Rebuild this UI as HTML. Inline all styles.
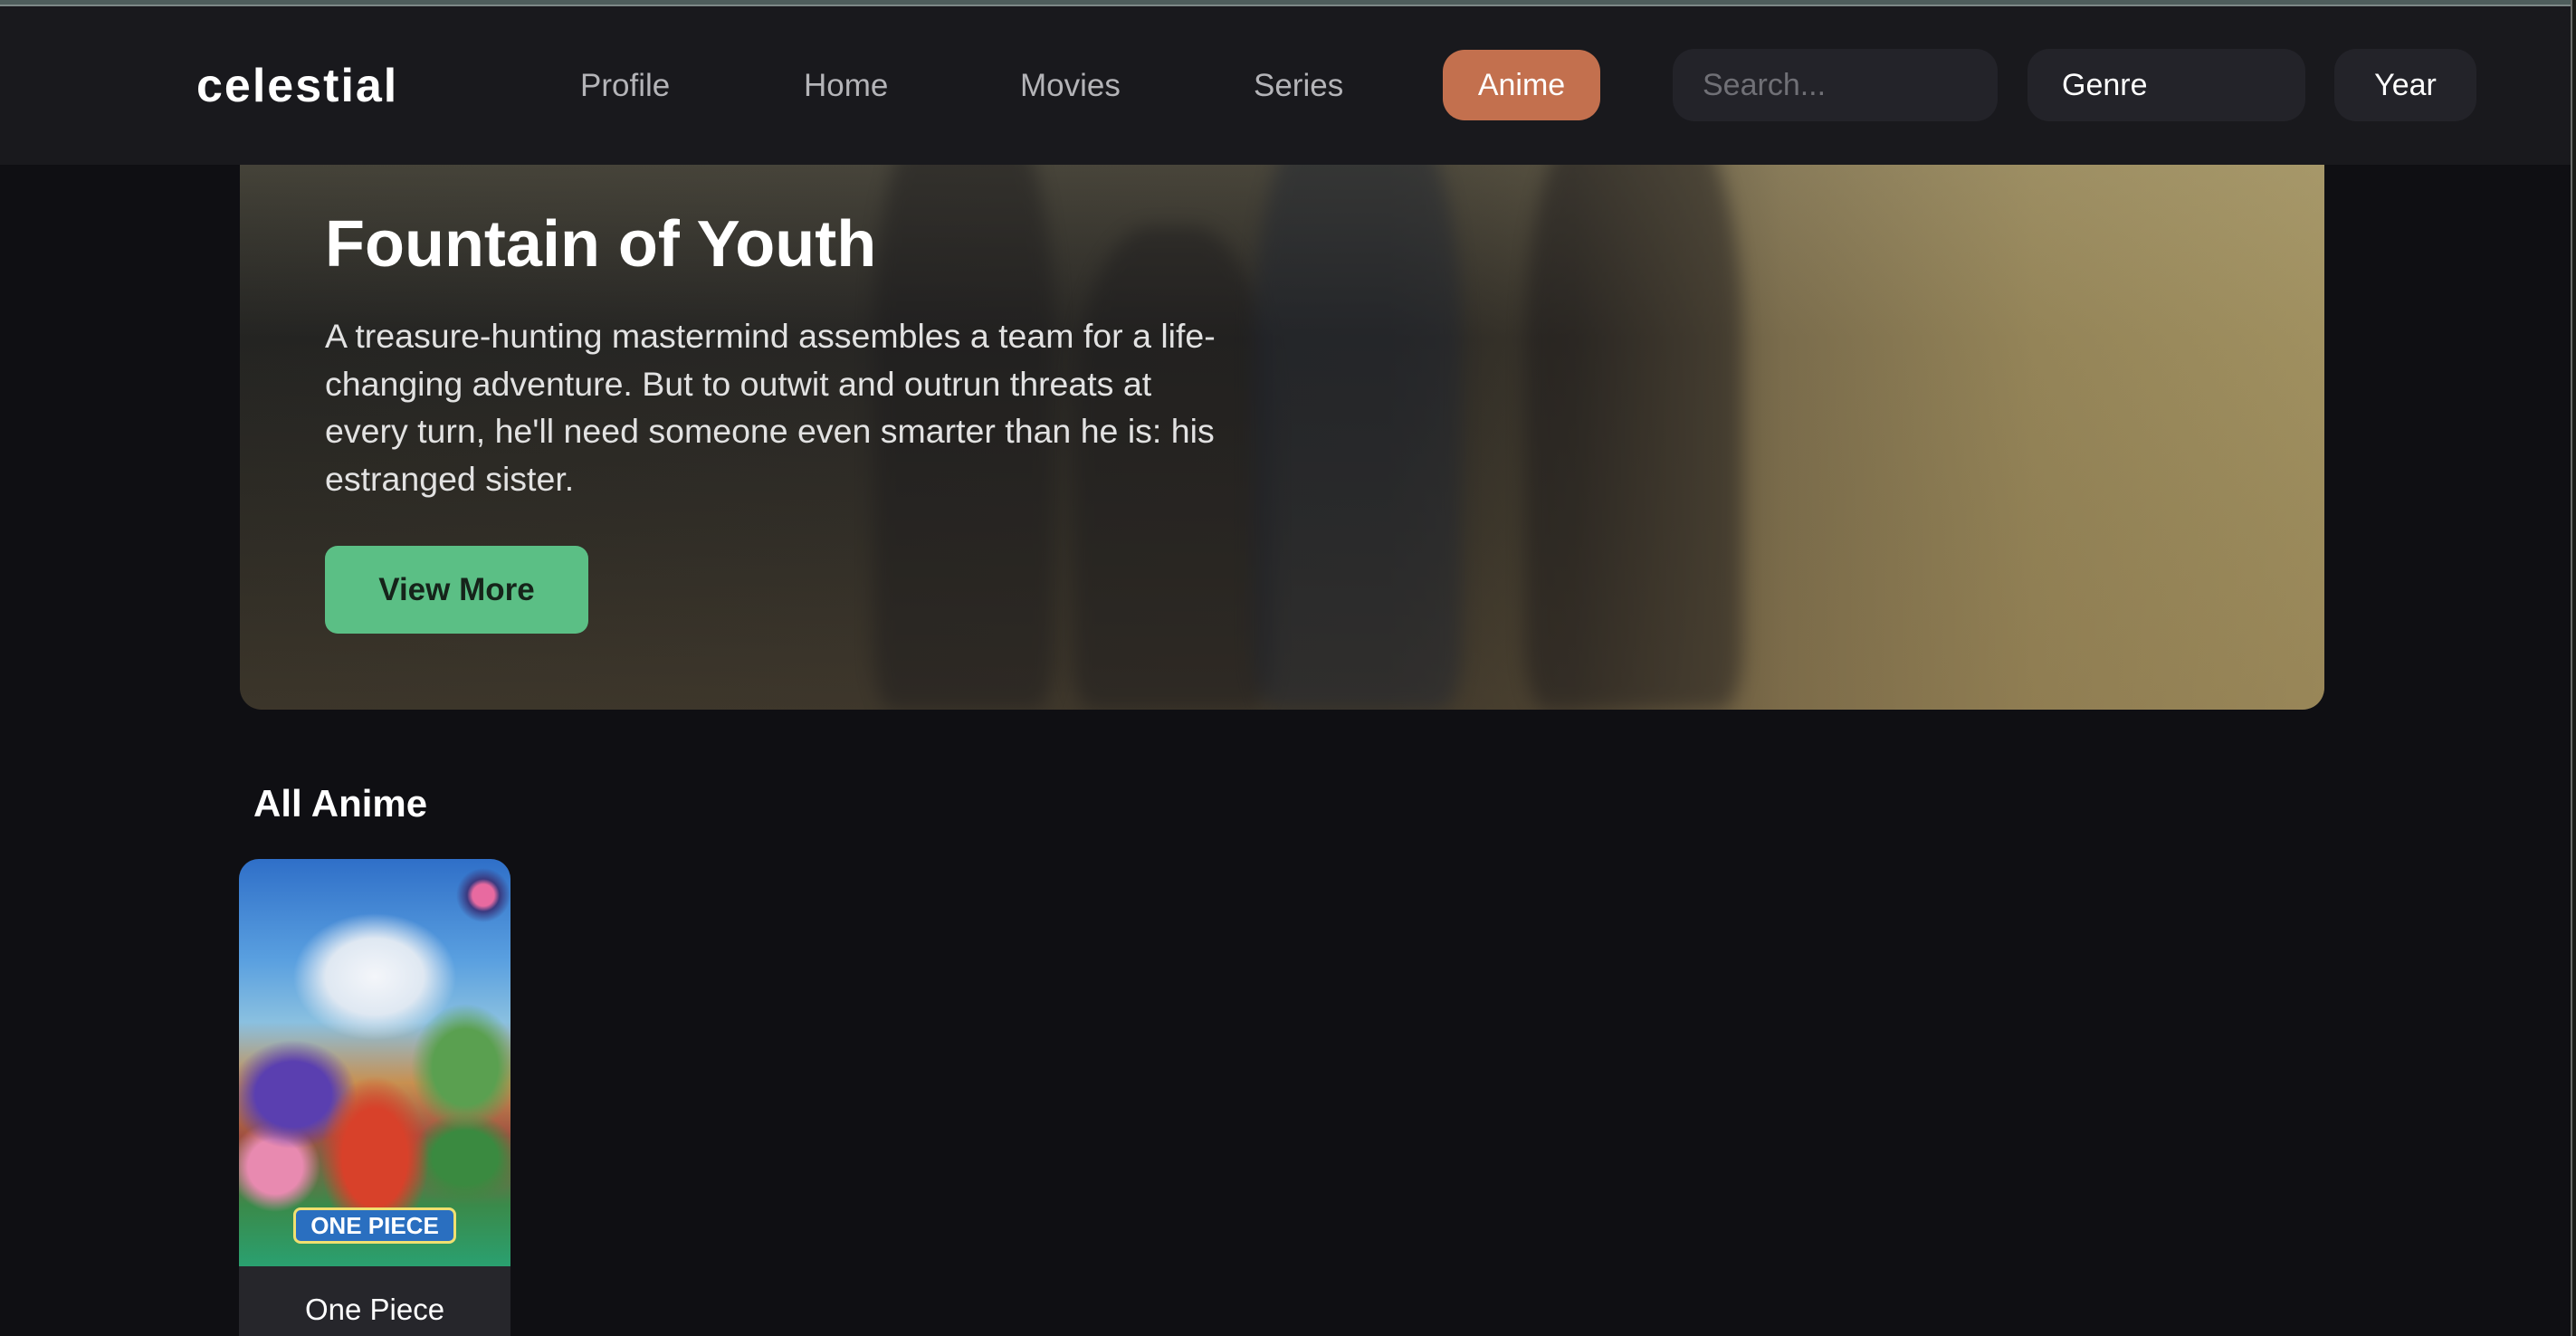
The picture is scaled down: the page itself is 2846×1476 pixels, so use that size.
<!DOCTYPE html>
<html><head><meta charset="utf-8"><style>
*{margin:0;padding:0;box-sizing:border-box}
html,body{width:2846px;height:1476px;overflow:hidden;background:#0f0f13;font-family:"Liberation Sans",sans-serif}
.topbar{position:absolute;left:0;top:0;width:2846px;height:7px;background:#4e5d5c;border-bottom:2px solid #7d8887}
.edge{position:absolute;left:2840px;top:0;width:6px;height:1476px;background:#1b1c18;border-left:2px solid #6a6c6a}
nav{position:absolute;left:0;top:7px;width:2840px;height:175px;background:#19191d;z-index:5}
.logo{position:absolute;left:217px;top:58px;font-size:52px;font-weight:bold;color:#fff;letter-spacing:2px}
.nl{position:absolute;top:68px;font-size:35px;color:#b4b4b8}
.btn{position:absolute;border-radius:24px;font-size:34px;display:flex;align-items:center}
.hero{position:absolute;left:265px;top:100px;width:2303px;height:684px;border-radius:0 0 24px 24px;overflow:hidden;
background:linear-gradient(90deg,#242422 0%,#272624 30%,#2a2824 55%,#3a352b 64%,#7a6c4c 74%,#948458 86%,#a09060 100%)}
.hero .l1{position:absolute;inset:0;background:linear-gradient(180deg,rgba(190,180,140,.3) 0%,rgba(0,0,0,0) 40%,rgba(120,100,60,.12) 70%,rgba(130,105,65,.25) 100%)}
.fig{position:absolute;background:#1b1a1c;border-radius:40% 40% 10% 10%;filter:blur(10px);opacity:.45}
.title{position:absolute;left:359px;top:229px;font-size:72px;font-weight:bold;color:#fff;z-index:2}
.desc{position:absolute;left:359px;top:345px;width:1010px;font-size:37.5px;line-height:52.5px;color:#e2e2e2;z-index:2}
.vm{position:absolute;left:359px;top:603px;width:291px;height:97px;border-radius:14px;background:#5bbf85;color:#16231a;font-size:35px;font-weight:bold;display:flex;align-items:center;justify-content:center;z-index:2}
.h2{position:absolute;left:280px;top:864px;font-size:42px;font-weight:bold;color:#fff}
.card{position:absolute;left:264px;top:949px;width:300px;height:527px;border-radius:22px 22px 0 0;overflow:hidden;background:#26262b}
.poster{position:absolute;left:0;top:0;width:300px;height:450px;
background:radial-gradient(ellipse 90px 70px at 150px 130px,#f4f6fa 0%,#dfe8f2 60%,rgba(220,230,240,0) 100%),
radial-gradient(circle 30px at 270px 40px,#e86aa0 0 40%,#3a3a80 60%,rgba(0,0,0,0) 100%),
radial-gradient(ellipse 60px 90px at 150px 330px,#d8412a 0 60%,rgba(0,0,0,0) 100%),
radial-gradient(ellipse 70px 60px at 60px 260px,#5a3fb0 0 60%,rgba(0,0,0,0) 100%),
radial-gradient(ellipse 60px 70px at 250px 230px,#5aa050 0 60%,rgba(0,0,0,0) 100%),
radial-gradient(ellipse 50px 50px at 40px 340px,#e88ab0 0 60%,rgba(0,0,0,0) 100%),
radial-gradient(ellipse 60px 50px at 250px 330px,#3a8a40 0 60%,rgba(0,0,0,0) 100%),
linear-gradient(180deg,#2f6fc8 0%,#5aa0e0 25%,#8ac0e0 40%,#c89050 55%,#a05040 68%,#3a8a4a 85%,#2aa070 100%)}
.oplogo{position:absolute;left:60px;top:385px;width:180px;height:40px;border-radius:8px;background:#2a6fc0;border:3px solid #f0e070;color:#fff;font-weight:bold;font-size:26px;text-align:center;line-height:34px}
.cname{position:absolute;left:0;top:450px;width:300px;height:77px;display:flex;align-items:center;justify-content:center;color:#fff;font-size:33px;padding-top:18px}
</style></head><body>
<div class="topbar"></div>
<div class="hero"><div class="l1"></div>
<div class="fig" style="left:700px;top:0;width:200px;height:684px"></div>
<div class="fig" style="left:920px;top:150px;width:220px;height:534px"></div>
<div class="fig" style="left:1120px;top:0;width:230px;height:684px;background:#1e2430"></div>
<div class="fig" style="left:1420px;top:0;width:240px;height:684px;background:#19171a"></div>
</div>
<nav>
<div class="logo">celestial</div>
<div class="nl" style="left:641px">Profile</div>
<div class="nl" style="left:888px">Home</div>
<div class="nl" style="left:1127px">Movies</div>
<div class="nl" style="left:1385px">Series</div>
<div class="btn" style="left:1594px;top:48px;width:174px;height:78px;background:#c3704e;color:#fff;justify-content:center">Anime</div>
<div class="btn" style="left:1848px;top:47px;width:359px;height:80px;background:#232329;color:#707076;padding-left:33px">Search...</div>
<div class="btn" style="left:2240px;top:47px;width:307px;height:80px;background:#232329;color:#fff;padding-left:38px">Genre</div>
<div class="btn" style="left:2579px;top:47px;width:157px;height:80px;background:#232329;color:#fff;justify-content:center">Year</div>
</nav>
<div class="title">Fountain of Youth</div>
<div class="desc">A treasure-hunting mastermind assembles a team for a life-changing adventure. But to outwit and outrun threats at every turn, he'll need someone even smarter than he is: his estranged sister.</div>
<div class="vm">View More</div>
<div class="h2">All Anime</div>
<div class="card"><div class="poster"></div><div class="oplogo">ONE PIECE</div><div class="cname">One Piece</div></div>
<div class="edge"></div>
</body></html>
